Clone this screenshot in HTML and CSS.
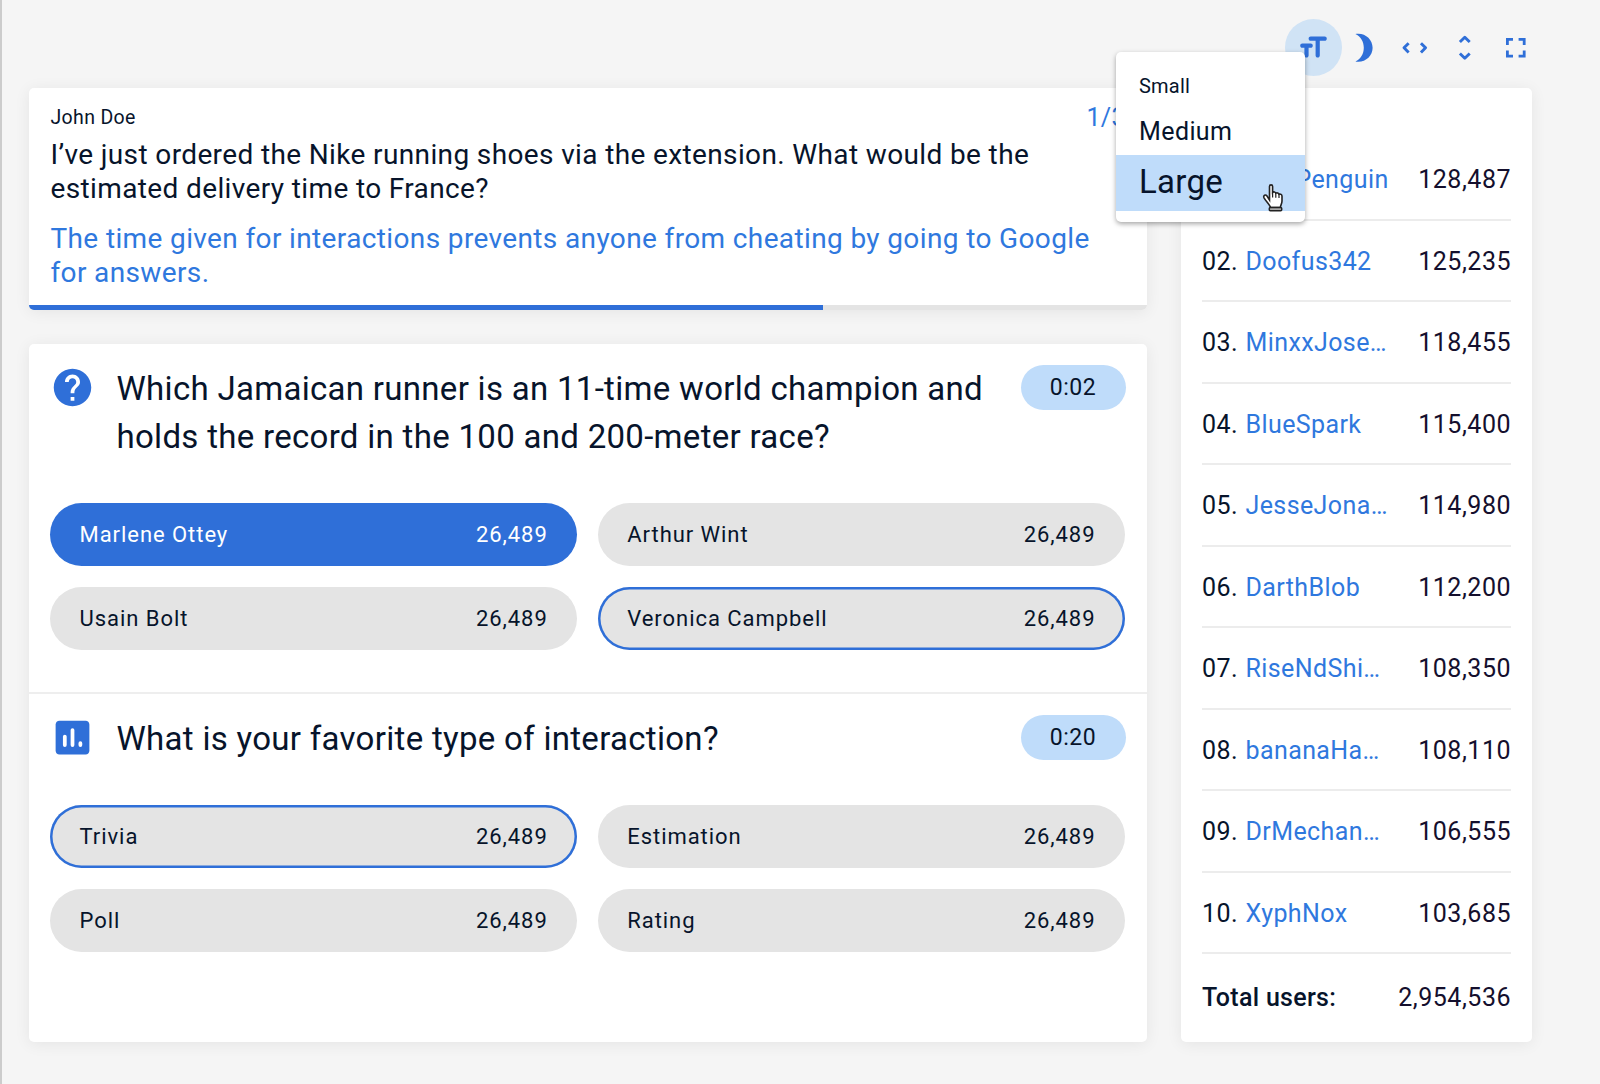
FILE: index.html
```html
<!DOCTYPE html>
<html lang="en">
<head>
<meta charset="utf-8">
<title>Live trivia</title>
<link rel="stylesheet" href="styles.css">
</head>
<body>
<main class="page">
  <nav class="toolbar">
    <button class="tool tool-active" aria-label="Text size"><svg viewBox="0 0 24 24"><path d="M9 5.5c0 .83.67 1.5 1.5 1.5H14v10.5c0 .83.67 1.5 1.5 1.5s1.5-.67 1.5-1.5V7h3.5c.83 0 1.5-.67 1.5-1.5S21.33 4 20.5 4h-10C9.67 4 9 4.67 9 5.5zM4.5 12H6v5.5c0 .83.67 1.5 1.5 1.5S9 18.33 9 17.5V12h1.5c.83 0 1.5-.67 1.5-1.5S11.33 9 10.5 9h-6C3.67 9 3 9.67 3 10.5S3.67 12 4.5 12z"/></svg></button>
    <button class="tool" aria-label="Dark mode"><svg viewBox="0 0 24 24"><path d="M8 2c-.7 0-1.4.08-2 .2C9.700 3.900 12 7.600 12 12s-2.300 8.100-6 9.800c.6.120 1.300.2 2 .2 5.800 0 10.300-4.480 10.300-10S13.800 2 8 2z"/></svg></button>
    <button class="tool" aria-label="Embed"><svg viewBox="0 0 24 24"><path class="line" d="M7.600 8.700L4.300 12l3.300 3.300M16.400 8.700l3.300 3.300-3.300 3.300"/></svg></button>
    <button class="tool" aria-label="Expand rows"><svg viewBox="0 0 24 24"><path class="line" d="M8.500 7.900L12 4.500l3.500 3.400M8.500 16.100l3.500 3.400 3.500-3.400"/></svg></button>
    <button class="tool" aria-label="Full screen"><svg viewBox="0 0 24 24"><path d="M7 14H5v5h5v-2H7v-3zm-2-4h2V7h3V5H5v5zm12 7h-3v2h5v-5h-2v3zM14 5v2h3v3h2V5h-5z"/></svg></button>
    <ul class="menu">
      <li class="menu-item size-small">Small</li>
      <li class="menu-item size-medium">Medium</li>
      <li class="menu-item size-large">Large</li>
    </ul>
    <svg class="cursor" viewBox="0 0 22 30"><path class="hand" d="M7.500 17V3.500C7.500 1.300 10.600 1.300 10.600 3.500V9.500C11.500 8.500 13.500 8.800 13.800 10.200C15 9.400 16.700 10 17 11.300C18.500 10.800 20 11.500 20 13.300V18C20 21 18.400 22 18.400 24.500H8.500C8.300 22.500 4.500 19 2 14.800C1 12.500 3.500 11 5 13Z"/><path class="crease" d="M10.600 9.500v5M13.800 10.200v4.500M17 11.300v3.800"/><rect class="cuff" x="7.300" y="24.500" width="12.400" height="3.200" rx="1"/></svg>
  </nav>
  <div class="columns">
    <div class="main">
      <section class="card message">
        <div class="message-head"><span class="author">John Doe</span><span class="counter">1/3</span></div>
        <p class="question">I’ve just ordered the Nike running shoes via the extension. What would be the<br>estimated delivery time to France?</p>
        <p class="reply">The time given for interactions prevents anyone from cheating by going to Google<br>for answers.</p>
        <div class="progress"><div class="progress-fill" style="width:71%"></div></div>
      </section>
      <section class="card quiz">
        <article class="poll">
          <header class="poll-head">
            <svg class="poll-icon" viewBox="0 0 24 24"><path d="M12 2C6.480 2 2 6.480 2 12s4.480 10 10 10 10-4.480 10-10S17.520 2 12 2zm1 17h-2v-2h2v2zm2.070-7.750l-.9.920C13.450 12.900 13 13.500 13 15h-2v-.5c0-1.100.45-2.100 1.170-2.830l1.240-1.260c.37-.36.59-.86.59-1.410 0-1.100-.9-2-2-2s-2 .9-2 2H8c0-2.210 1.790-4 4-4s4 1.790 4 4c0 .88-.36 1.680-.93 2.250z"/></svg>
            <h2 class="title">Which Jamaican runner is an 11-time world champion and<br>holds the record in the 100 and 200-meter race?</h2>
            <span class="timer">0:02</span>
          </header>
          <div class="options">
            <button class="option option-filled"><span>Marlene Ottey</span><span>26,489</span></button>
            <button class="option"><span>Arthur Wint</span><span>26,489</span></button>
            <button class="option"><span>Usain Bolt</span><span>26,489</span></button>
            <button class="option option-outlined"><span>Veronica Campbell</span><span>26,489</span></button>
          </div>
        </article>
        <article class="poll">
          <header class="poll-head">
            <svg class="poll-icon" viewBox="0 0 24 24"><path d="M19 3H5c-1.100 0-2 .9-2 2v14c0 1.100.9 2 2 2h14c1.100 0 2-.9 2-2V5c0-1.100-.9-2-2-2z"/><path class="bars" d="M7.900 11.500V16M12 8v8M16.200 15v1"/></svg>
            <h2 class="title">What is your favorite type of interaction?</h2>
            <span class="timer">0:20</span>
          </header>
          <div class="options">
            <button class="option option-outlined"><span>Trivia</span><span>26,489</span></button>
            <button class="option"><span>Estimation</span><span>26,489</span></button>
            <button class="option"><span>Poll</span><span>26,489</span></button>
            <button class="option"><span>Rating</span><span>26,489</span></button>
          </div>
        </article>
      </section>
    </div>
    <aside class="card board">
      <ol class="ranks">
        <li class="rank"><span class="place">01.</span><span class="name">PinkPenguin</span><span class="score">128,487</span></li>
        <li class="rank"><span class="place">02.</span><span class="name">Doofus342</span><span class="score">125,235</span></li>
        <li class="rank"><span class="place">03.</span><span class="name">MinxxJose…</span><span class="score">118,455</span></li>
        <li class="rank"><span class="place">04.</span><span class="name">BlueSpark</span><span class="score">115,400</span></li>
        <li class="rank"><span class="place">05.</span><span class="name">JesseJona…</span><span class="score">114,980</span></li>
        <li class="rank"><span class="place">06.</span><span class="name">DarthBlob</span><span class="score">112,200</span></li>
        <li class="rank"><span class="place">07.</span><span class="name">RiseNdShi…</span><span class="score">108,350</span></li>
        <li class="rank"><span class="place">08.</span><span class="name">bananaHa…</span><span class="score">108,110</span></li>
        <li class="rank"><span class="place">09.</span><span class="name">DrMechan…</span><span class="score">106,555</span></li>
        <li class="rank"><span class="place">10.</span><span class="name">XyphNox</span><span class="score">103,685</span></li>
      </ol>
      <div class="total"><b class="total-label">Total users:</b><span class="score">2,954,536</span></div>
    </aside>
  </div>
</main>
</body>
</html>
```
FILE: styles.css
```css
* { box-sizing: border-box; }
body { margin: 0; background: #f5f5f5; color: #07142b; font-family: Roboto, "Liberation Sans", sans-serif; }
button { font: inherit; color: inherit; border: 0; }
p, h2, ul, ol { margin: 0; padding: 0; list-style: none; }

.page { height: 1084px; padding: 19px 68px 42px 27px; border-left: 2px solid #cccccc; overflow: hidden; }

.toolbar { position: relative; display: flex; justify-content: flex-end; height: 69px; margin-right: -9px; }
.tool { flex: none; display: flex; align-items: center; justify-content: center; width: 50.600px; height: 57px; padding: 0; background: none; }
.tool svg { flex: none; width: 33.600px; height: 33.600px; fill: #2f6fd8; }
.tool .line { fill: none; stroke: #2f6fd8; stroke-width: 2.100; stroke-linejoin: round; }
.tool-active { width: 57px; margin-right: -3px; border-radius: 50%; background: #d0e3f5; }

.menu { position: absolute; z-index: 2; left: 1087px; top: 32.500px; width: 189px; height: 170px; padding: 11px 0; border-radius: 5px; background: #fff; box-shadow: 0 2px 5px rgba(0, 0, 0, .35); }
.menu-item { display: flex; align-items: center; padding-left: 23px; }
.size-small { height: 45px; padding-top: 2px; font-size: 20px; letter-spacing: .2px; }
.size-medium { height: 47px; padding-top: 1px; font-size: 25px; letter-spacing: .4px; }
.size-large { height: 56px; padding-bottom: 2px; font-size: 33px; letter-spacing: .3px; background: #bfdcfa; }
.cursor { position: absolute; z-index: 3; left: 1233px; top: 164px; width: 22px; height: 30px; }
.hand { fill: #fff; stroke: #222; stroke-width: 1.600; }
.crease { fill: none; stroke: #222; stroke-width: 1.200; }
.cuff { fill: #aaa; stroke: #222; stroke-width: 1.500; }

.columns { display: flex; gap: 33.500px; height: 954px; }
.main { flex: none; width: 1118px; display: flex; flex-direction: column; gap: 34px; }
.card { border-radius: 5px; background: #fff; box-shadow: 0 2px 16px rgba(0, 0, 0, .07); }

.message { position: relative; flex: none; height: 222px; padding: 13px 21px 0 21.500px; overflow: hidden; }
.message-head { display: flex; justify-content: space-between; height: 37px; line-height: 34px; }
.author { font-size: 19.500px; letter-spacing: .35px; }
.counter { font-size: 25px; color: #2f78de; line-height: 34px; letter-spacing: .4px; }
.question, .reply { font-size: 28px; line-height: 34px; letter-spacing: .37px; white-space: nowrap; }
.reply { margin-top: 16px; color: #2f78de; }
.progress { position: absolute; left: 0; right: 0; bottom: 0; height: 5.500px; background: #e4e4e4; }
.progress-fill { height: 100%; background: #2f6fd8; }

.quiz { flex: 1; }
.poll { height: 350px; padding: 21px 21.500px 0 21px; border-bottom: 2px solid #eee; }
.poll + .poll { height: 348px; border: 0; }
.poll-head { display: flex; align-items: flex-start; }
.poll-icon { flex: none; width: 45px; height: 45px; margin-right: 21.500px; fill: #2f6fd8; }
.bars { fill: none; stroke: #fff; stroke-width: 2; stroke-linecap: round; }
.title { flex: 1; font-weight: 400; font-size: 33px; line-height: 48px; letter-spacing: .3px; white-space: nowrap; }
.timer { flex: none; width: 105px; height: 45px; border-radius: 23px; background: #bfdcfa; font-size: 23px; line-height: 45.500px; letter-spacing: .6px; text-align: center; }
.options { display: grid; grid-template-columns: 1fr 1fr; gap: 21px; margin: 42px 1px 0 0; }
.option { display: flex; justify-content: space-between; align-items: center; height: 63px; padding: 0 29px 0 29.500px; border-radius: 32px; background: #e4e4e4; font-size: 22px; letter-spacing: .95px; }
.option-filled { background: #2f6fd8; color: #fff; }
.option-outlined { box-shadow: inset 0 0 0 2.500px #2f6fd8; }

.board { flex: 1; padding: 51px 21px 0 21.500px; font-size: 25px; letter-spacing: .5px; }
.rank { display: flex; align-items: center; height: 81.500px; padding-top: 2px; border-bottom: 2px solid #ececec; }
.place { width: 43.500px; }
.name { flex: 1; color: #2f78de; letter-spacing: .4px; }
.score { color: #140f2d; }
.total { display: flex; justify-content: space-between; align-items: center; height: 86px; }
.total-label { font-weight: 500; letter-spacing: .3px; }
```
